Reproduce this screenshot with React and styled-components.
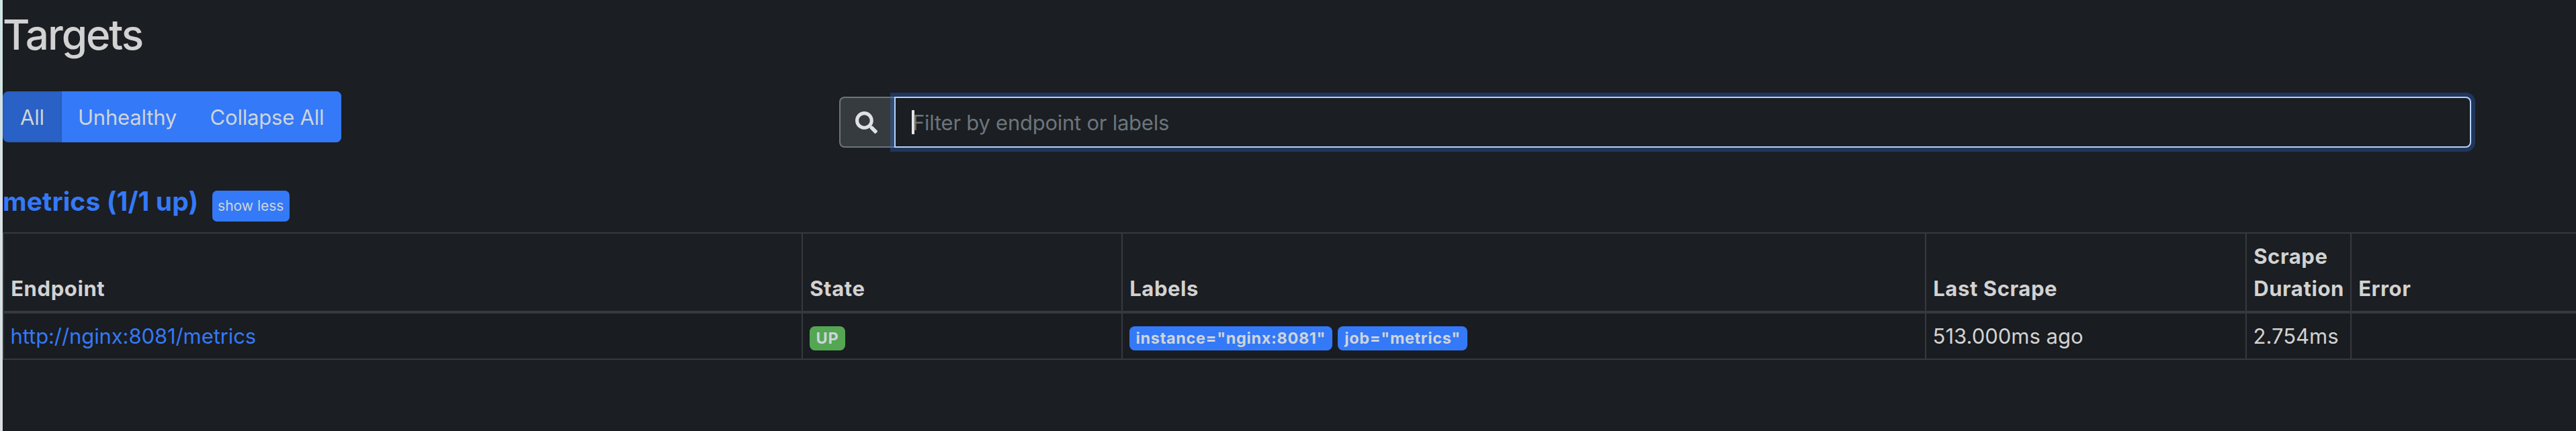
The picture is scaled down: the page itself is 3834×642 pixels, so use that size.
import React from "react";
import styled, { createGlobalStyle } from "styled-components";
import { FaSearch } from "react-icons/fa";

const color = {
  bg: "#1b1e22",
  row: "#191c20",
  line: "#36393d",
  text: "#d2d2d2",
  blue: "#3479f7",
  green: "#54a653",
  onBlue: "#ced4da",
};

const GlobalStyle = createGlobalStyle`
  *, *::before, *::after { box-sizing: border-box; }
  html, body { margin: 0; background: ${color.bg}; }
  body {
    overflow: hidden;
    color: ${color.text};
    font-family: Inter, "Liberation Sans", sans-serif;
    font-size: 31px;
    line-height: 48px;
  }
`;

const Frame = styled.div`
  display: flex;
  min-height: 642px;
`;

const WindowEdge = styled.div`
  flex: none;
  width: 4px;
  background: linear-gradient(#cfe4e4, #dae2e4 50%, #d9dfe2);
`;

const Page = styled.main`
  flex: 1;
  min-width: 0;
  padding-top: 13px;
  background: ${color.bg};
`;

const Title = styled.h2`
  margin: 0 0 46px;
  font-size: 62px;
  font-weight: 500;
  line-height: 77px;
  letter-spacing: -2.1px;
`;

const Toolbar = styled.div`
  display: flex;
  align-items: flex-start;
`;

const ButtonGroup = styled.div`
  display: flex;
  border-radius: 8px;
  overflow: hidden;
`;

const GroupButton = styled.button`
  width: ${(p) => p.$width}px;
  height: 76px;
  padding: 1px 0 0;
  border: 2px solid ${(p) => (p.$active ? "#285cba" : color.blue)};
  border-radius: ${(p) => (p.$active ? "8px 0 0 8px" : "0")};
  background: ${(p) => (p.$active ? "#2a61c6" : color.blue)};
  color: ${color.onBlue};
  font: inherit;
  letter-spacing: -0.2px;
  white-space: nowrap;
`;

const SearchGroup = styled.div`
  display: flex;
  height: 76px;
  margin: 8px 0 0 741px;
`;

const SearchAddon = styled.div`
  display: flex;
  align-items: center;
  width: 82px;
  padding-left: 22px;
  border: 2px solid #6c757d;
  border-right: 0;
  border-radius: 8px 0 0 8px;
  background: #363b3f;
  color: #dee2e6;
  font-size: 33px;
`;

const SearchField = styled.div`
  position: relative;
  display: flex;
  align-items: center;
  width: 2347px;
  padding-left: 24px;
  border: 2px solid #b4d2fb;
  border-radius: 0 8px 8px 0;
  background: ${color.bg};
  box-shadow: 0 0 0 6px rgba(52, 121, 247, 0.27);
`;

const Caret = styled.span`
  width: 4px;
  height: 36px;
  margin-right: -3px;
  border-radius: 1px;
  background: #e3e6e9;
`;

const Placeholder = styled.span`
  padding-top: 1px;
  color: #6c757d;
  letter-spacing: -0.25px;
`;

const PoolHeader = styled.div`
  display: flex;
  align-items: flex-start;
  height: 71px;
  margin-top: 55px;
`;

const PoolName = styled.h3`
  margin: 0 20.5px 0 0;
  color: ${color.blue};
  font-size: 39px;
  font-weight: 700;
  line-height: 49px;
  letter-spacing: 0.1px;
`;

const ToggleButton = styled.button`
  width: 115px;
  height: 46px;
  margin-top: 9px;
  padding: 0;
  border: 0;
  border-radius: 7px;
  background: ${color.blue};
  color: ${color.onBlue};
  font: inherit;
  font-size: 21px;
  line-height: 46px;
`;

const Table = styled.div`
  border-top: 2px solid ${color.line};
`;

const Row = styled.div`
  display: grid;
  grid-template-columns: 1189px 476px 1196px 477px 156px 1fr;
  height: ${(p) => (p.$head ? 119 : 69)}px;
  border-bottom: ${(p) => (p.$head ? 4 : 2)}px solid ${color.line};
  background: ${(p) => (p.$head ? color.bg : color.row)};
`;

const Cell = styled.div`
  display: flex;
  align-items: flex-start;
  gap: 8px;
  padding: 9.6px 9.6px 0;
  border-left: 2px solid ${color.line};
`;

const HeadCell = styled(Cell)`
  align-items: flex-end;
  padding: 9.6px 9px 9.6px 10.2px;
  font-weight: 700;
  letter-spacing: 0.6px;
`;

const Link = styled.a`
  color: ${color.blue};
  text-decoration: none;
  letter-spacing: -0.1px;
`;

const Badge = styled.span`
  height: 36px;
  margin-top: 9.4px;
  padding: 0 10px;
  border-radius: 8px;
  background: ${(p) => (p.$success ? color.green : color.blue)};
  color: ${color.onBlue};
  font-size: 23.5px;
  font-weight: 700;
  line-height: 36px;
  letter-spacing: 0.63px;
  white-space: nowrap;
`;

const columns = ["Endpoint", "State", "Labels", "Last Scrape", "Scrape Duration", "Error"];

export default function App() {
  return (
    <>
      <GlobalStyle />
      <Frame>
        <WindowEdge />
        <Page>
          <Title>Targets</Title>
          <Toolbar>
            <ButtonGroup>
              <GroupButton $active $width={88}>All</GroupButton>
              <GroupButton $width={195}>Unhealthy</GroupButton>
              <GroupButton $width={221}>Collapse All</GroupButton>
            </ButtonGroup>
            <SearchGroup>
              <SearchAddon>
                <FaSearch />
              </SearchAddon>
              <SearchField>
                <Caret />
                <Placeholder>Filter by endpoint or labels</Placeholder>
              </SearchField>
            </SearchGroup>
          </Toolbar>
          <PoolHeader>
            <PoolName>metrics (1/1 up)</PoolName>
            <ToggleButton>show less</ToggleButton>
          </PoolHeader>
          <Table>
            <Row $head>
              {columns.map((name) => (
                <HeadCell key={name}>{name}</HeadCell>
              ))}
            </Row>
            <Row>
              <Cell>
                <Link>http://nginx:8081/metrics</Link>
              </Cell>
              <Cell>
                <Badge $success>UP</Badge>
              </Cell>
              <Cell>
                <Badge>instance="nginx:8081"</Badge>
                <Badge>job="metrics"</Badge>
              </Cell>
              <Cell>513.000ms ago</Cell>
              <Cell>2.754ms</Cell>
              <Cell />
            </Row>
          </Table>
        </Page>
      </Frame>
    </>
  );
}
